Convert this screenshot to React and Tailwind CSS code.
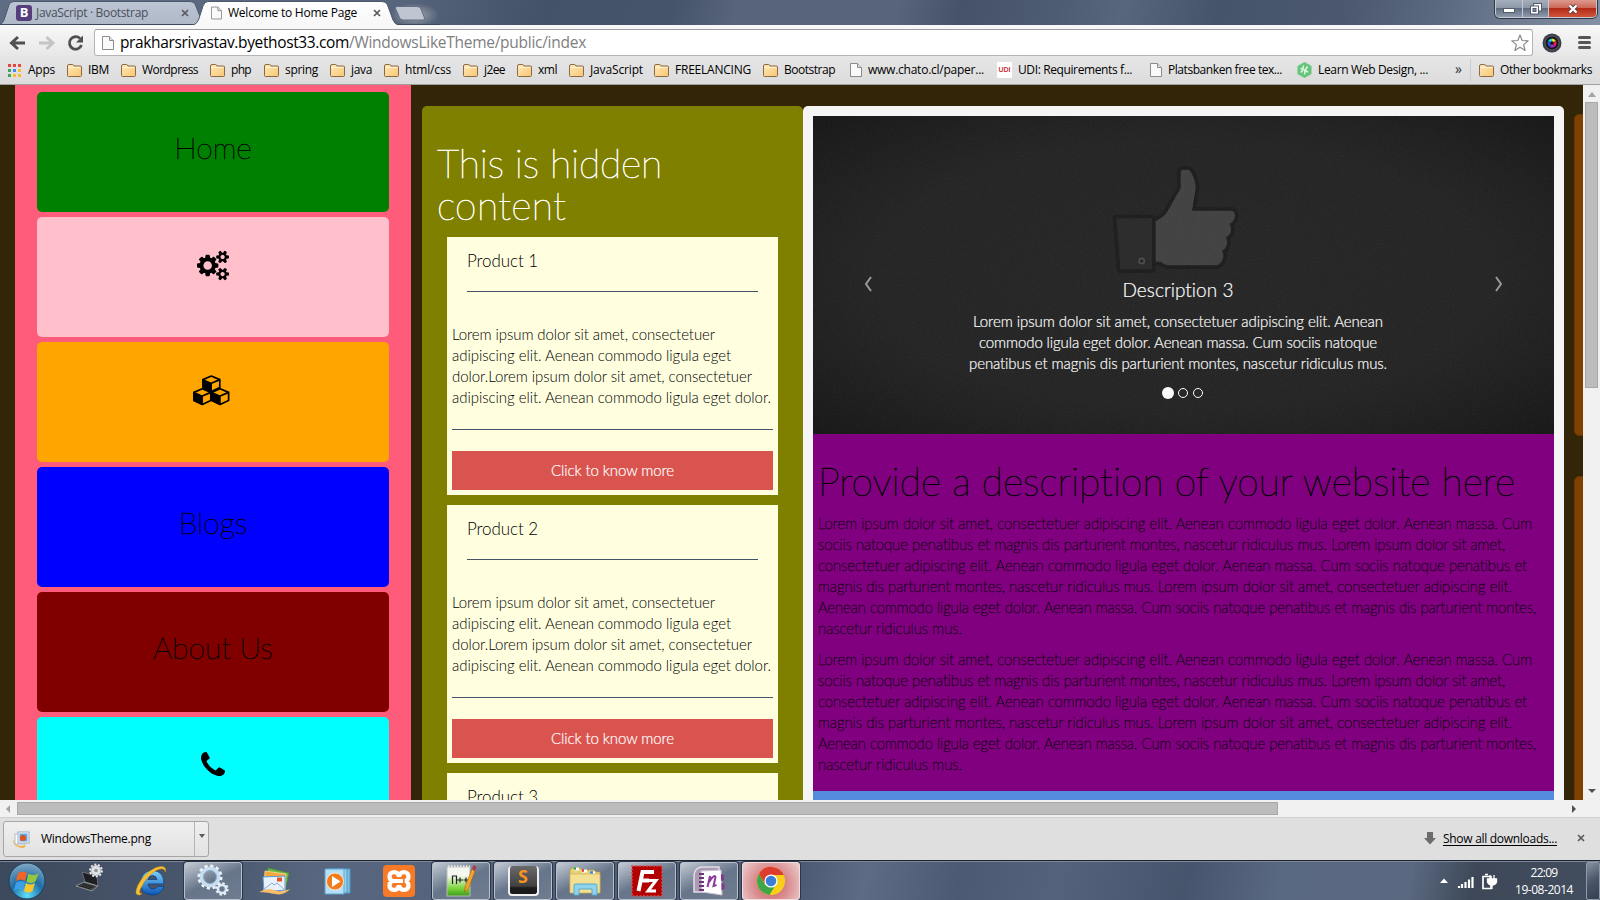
import React, { useLayoutEffect, useRef } from "react";

const LEAD_LINES = [
  ["Lorem ipsum dolor sit amet, consectetuer adipiscing elit. Aenean commodo ligula eget dolor. Aenean massa. Cum", 714],
  ["sociis natoque penatibus et magnis dis parturient montes, nascetur ridiculus mus. Lorem ipsum dolor sit amet,", 687],
  ["consectetuer adipiscing elit. Aenean commodo ligula eget dolor. Aenean massa. Cum sociis natoque penatibus et", 709],
  ["magnis dis parturient montes, nascetur ridiculus mus. Lorem ipsum dolor sit amet, consectetuer adipiscing elit.", 694],
  ["Aenean commodo ligula eget dolor. Aenean massa. Cum sociis natoque penatibus et magnis dis parturient montes,", 718],
  ["nascetur ridiculus mus.", 144],
];

const PRODUCT_LINES = [
  ["Lorem ipsum dolor sit amet, consectetuer", 263],
  ["adipiscing elit. Aenean commodo ligula eget", 279],
  ["dolor.Lorem ipsum dolor sit amet, consectetuer", 300],
  ["adipiscing elit. Aenean commodo ligula eget dolor.", 319],
];

const SLIDE_LINES = [
  ["Lorem ipsum dolor sit amet, consectetuer adipiscing elit. Aenean", 410],
  ["commodo ligula eget dolor. Aenean massa. Cum sociis natoque", 398],
  ["penatibus et magnis dis parturient montes, nascetur ridiculus mus.", 418],
];

/* Single-line label whose tracking is adjusted to fill a given width. */
function Fit({ w, className = "", children }) {
  const ref = useRef(null);
  useLayoutEffect(() => {
    const el = ref.current;
    el.style.letterSpacing = "0px";
    const natural = el.getBoundingClientRect().width;
    el.style.letterSpacing = (w - natural) / el.textContent.length + "px";
  }, [w]);
  return (
    <span ref={ref} className={"block w-fit whitespace-pre shrink-0 [font-variant-ligatures:none] " + className}>
      {children}
    </span>
  );
}

function Folder() {
  return (
    <svg className="shrink-0" width="15" height="13" viewBox="0 0 15 13">
      <defs>
        <linearGradient id="fold" x1="0" y1="0" x2="1" y2="1">
          <stop offset="0" stopColor="#ffe9b8" />
          <stop offset="1" stopColor="#f8c772" />
        </linearGradient>
      </defs>
      <path d="M.5 11.5V2Q.5.5 2 .5h3.500Q6.500.5 7 2h6.500q1 0 1 1v8.500q0 1-1 1h-12q-1 0-1-1z" fill="url(#fold)" stroke="#8b6a48" />
      <path d="M1.500 3.500h12" stroke="#fff3d4" />
    </svg>
  );
}

function Page({ w = 12, h = 14 }) {
  return (
    <svg className="shrink-0" width={w} height={h} viewBox="0 0 12 14">
      <path d="M.5.5h7l4 4v9H.5z" fill="#fafafa" stroke="#8c8c8c" />
      <path d="M7.500.5v4h4" fill="#e2e2e2" stroke="#8c8c8c" />
    </svg>
  );
}

function Cross({ c = "#5a5a5a" }) {
  return (
    <svg className="shrink-0" width="8" height="8" viewBox="0 0 8 8">
      <path d="M1 1l6 6M7 1l-6 6" stroke={c} strokeWidth="1.700" />
    </svg>
  );
}

function TitleBar() {
  return (
    <div className="relative h-[25px] shrink-0 bg-[linear-gradient(105deg,#5f6d84_0%,#56647c_25%,#445268_34%,#46546b_42%,#57647b_46%,#57647c_56%,#46526a_60%,#4d5b73_66%,#58667d_70%,#46546b_76%,#4b586f_84%,#5c6a81_90%,#8490a3_100%)]">
      <svg className="absolute left-0 top-0" width="440" height="25" viewBox="0 0 440 25">
        <defs>
          <linearGradient id="tabA" x1="0" y1="0" x2="0" y2="1">
            <stop offset="0" stopColor="#bcc5d3" />
            <stop offset="1" stopColor="#aeb8c7" />
          </linearGradient>
          <linearGradient id="tabB" x1="0" y1="0" x2="0" y2="1">
            <stop offset="0" stopColor="#fff" />
            <stop offset="1" stopColor="#f7f7f7" />
          </linearGradient>
          <radialGradient id="glow">
            <stop offset="0" stopColor="#d9d5c8" stopOpacity=".6" />
            <stop offset="1" stopColor="#d9d5c8" stopOpacity="0" />
          </radialGradient>
        </defs>
        <ellipse cx="415" cy="15" rx="24" ry="12" fill="url(#glow)" />
        <path d="M0 24.500Q3 23 4 20L9 5Q10 1.500 14 1.500H190Q194 1.500 195.500 5L203 24.500z" fill="url(#tabA)" stroke="#4c586b" />
        <path d="M0 24.500H440" stroke="#3c485b" />
        <path d="M192 25.500Q197 24 198.500 20L203 6Q204.500 1.500 208 1.500H382Q386 1.500 387.500 5L393 20Q394.500 24 399 25.500z" fill="url(#tabB)" stroke="#4c586b" />
        <path d="M397 6.500H417Q420 6.500 421 9L424.500 18Q425 20 423 20H403Q400.500 20 399.500 17.500L395.500 8.500Q395 6.500 397 6.500z" fill="#bfc6d1" stroke="#616e82" />
        <rect x="16" y="5" width="16" height="16" rx="3" fill="#563d7c" />
      </svg>
      <div className="relative flex h-[25px] items-center font-['Open_Sans',sans-serif] text-[12px]">
        <div className="ml-4 flex h-4 w-4 items-center justify-center text-[13px] font-bold text-white">B</div>
        <div className="ml-1 w-[145px] text-[#4b4f58]"><Fit w={112}>JavaScript · Bootstrap</Fit></div>
        <div className="-ml-[3px] flex w-[33px] pl-[3px]"><Cross /></div>
        <div className="flex w-[17px]"><Page w={11} h={14} /></div>
        <div className="w-[145px] text-black"><Fit w={129}>Welcome to Home Page</Fit></div>
        <div className="flex"><Cross /></div>
      </div>
      <div className="absolute right-[3px] top-0 flex h-[18px] overflow-hidden rounded-b-[5px] border border-t-0 border-[#c3c9d2] shadow-[0_0_0_1px_#30394a]">
        <div className="flex w-[27px] items-center justify-center border-r border-[#c3c9d2] bg-[linear-gradient(#a5aebb_0%,#8d98a8_45%,#5f6c80_50%,#8f9aab_100%)]">
          <div className="mt-1 h-[5px] w-[12px] border border-[#535b6b] bg-white" />
        </div>
        <div className="flex w-[26px] items-center justify-center border-r border-[#c3c9d2] bg-[linear-gradient(#a5aebb_0%,#8d98a8_45%,#5f6c80_50%,#8f9aab_100%)]">
          <svg width="12" height="12" viewBox="0 0 12 12">
            <rect x="3.500" y=".5" width="8" height="7.500" fill="#fff" stroke="#535b6b" />
            <rect x=".5" y="3" width="8" height="8" fill="#fff" stroke="#535b6b" />
            <rect x="3" y="5.500" width="3" height="3" fill="#7d889a" stroke="#535b6b" />
          </svg>
        </div>
        <div className="flex w-[47px] items-center justify-center bg-[linear-gradient(#dc9a8e_0%,#cd6a5a_45%,#b32a17_50%,#d0553b_100%)]">
          <svg width="12" height="10" viewBox="0 0 12 10">
            <path d="M2.500 1.500l7 7M9.500 1.500l-7 7" stroke="#5d3a3e" strokeWidth="4" />
            <path d="M2.500 1.500l7 7M9.500 1.500l-7 7" stroke="#fff" strokeWidth="2.400" />
          </svg>
        </div>
      </div>
    </div>
  );
}

function Toolbar() {
  return (
    <div className="flex h-[33px] shrink-0 items-center bg-[linear-gradient(#f8f8f8,#e6e6e6)] pt-[2px] font-['Open_Sans',sans-serif]">
      <svg className="shrink-0" width="94" height="18" viewBox="0 0 94 18">
        <path d="M25 9H12M18 3L11.500 9L18 15" fill="none" stroke="#505050" strokeWidth="3" />
        <path d="M39 9H52M46.500 3L53 9L46.500 15" fill="none" stroke="#c4c4c4" strokeWidth="3" />
        <path d="M80 4.500A6.200 6.200 0 1 0 81.500 11" fill="none" stroke="#505050" strokeWidth="2.800" />
        <path d="M83 1.500V8.500H76z" fill="#505050" />
      </svg>
      <div className="flex h-[27px] w-[1439px] shrink-0 items-center rounded-[3px] border border-[#b4b4b4] border-t-[#9c9c9c] bg-white pl-[7px] pr-[3px]">
        <Page w={12} h={16} />
        <div className="ml-[6px] flex text-[15.500px]">
          <Fit w={229} className="text-black">prakharsrivastav.byethost33.com</Fit>
          <Fit w={237} className="text-[#808080]">/WindowsLikeTheme/public/index</Fit>
        </div>
        <svg className="ml-auto" width="18" height="18" viewBox="0 0 18 18">
          <path d="M9 1l2.200 5.500 6 .4-4.600 3.700 1.500 5.900L9 13.300l-5.100 3.200 1.500-5.900L.8 6.900l6-.4z" fill="#fff" stroke="#8a8a8a" strokeWidth="1.200" strokeLinejoin="round" />
        </svg>
      </div>
      <svg className="ml-[9px] shrink-0" width="20" height="20" viewBox="0 0 20 20">
        <circle cx="10" cy="10" r="9.500" fill="#3c4046" />
        <circle cx="10" cy="10" r="7" fill="#15171a" stroke="#5c6066" />
        <path d="M10 10L6 8A4.500 4.500 0 0 1 10 5.500z" fill="#21d3d8" />
        <path d="M10 10V5.500A4.500 4.500 0 0 1 14 8z" fill="#e6dc2a" />
        <path d="M10 10l4-2a4.500 4.500 0 0 1-1 5.500z" fill="#e0204a" />
        <path d="M10 10l3 3.500a4.500 4.500 0 0 1-5 .5z" fill="#b026d0" />
        <path d="M10 10l-2 4a4.500 4.500 0 0 1-2-6z" fill="#2552d8" />
        <circle cx="10" cy="10" r="1.800" fill="#111" />
      </svg>
      <div className="ml-[16px] flex flex-col gap-[2px]">
        <div className="h-[3px] w-[13px] rounded-sm bg-[#555]" />
        <div className="h-[3px] w-[13px] rounded-sm bg-[#555]" />
        <div className="h-[3px] w-[13px] rounded-sm bg-[#555]" />
      </div>
    </div>
  );
}

const FOLDERS = [
  ["IBM", "w-[54px]", 21],
  ["Wordpress", "w-[89px]", 56],
  ["php", "w-[54px]", 20],
  ["spring", "w-[66px]", 33],
  ["java", "w-[54px]", 21],
  ["html/css", "w-[79px]", 46],
  ["j2ee", "w-[54px]", 21],
  ["xml", "w-[52px]", 19],
  ["JavaScript", "w-[85px]", 53],
  ["FREELANCING", "w-[109px]", 76],
  ["Bootstrap", "w-[87px]", 51],
];

function Bookmarks() {
  const dots = ["#e8453c", "#e8453c", "#e8453c", "#3aa757", "#4688f1", "#f9bb2d", "#3aa757", "#f9bb2d", "#f9bb2d"];
  return (
    <div className="flex h-[27px] shrink-0 items-center border-b border-[#a0a0a0] bg-[linear-gradient(#e5e5e5,#dcdcdc)] pb-[2px] pl-2 font-['Open_Sans',sans-serif] text-[12px] text-black">
      <svg className="shrink-0" width="13" height="13" viewBox="0 0 13 13">
        {dots.map((c, i) => (
          <rect key={i} x={(i % 3) * 5} y={Math.floor(i / 3) * 5} width="3" height="3" fill={c} />
        ))}
      </svg>
      <div className="ml-[7px] w-[39px] shrink-0"><Fit w={27}>Apps</Fit></div>
      {FOLDERS.map(([name, width, tw]) => (
        <div key={name} className={"flex shrink-0 items-center gap-1.5 " + width}>
          <Folder />
          <Fit w={tw}>{name}</Fit>
        </div>
      ))}
      <div className="flex w-[147px] shrink-0 items-center gap-1.5"><Page /><Fit w={116}>www.chato.cl/paper...</Fit></div>
      <div className="flex w-[153px] shrink-0 items-center gap-1.5">
        <div className="flex h-4 w-[15px] items-center justify-center bg-white font-['Liberation_Sans',sans-serif] text-[7px] font-bold text-[#c8323c]">UDI</div>
        <Fit w={114}>UDI: Requirements f...</Fit>
      </div>
      <div className="flex w-[147px] shrink-0 items-center gap-1.5"><Page /><Fit w={114}>Platsbanken free tex...</Fit></div>
      <div className="flex w-[158px] shrink-0 items-center gap-1.5">
        <svg className="shrink-0" width="15" height="16" viewBox="0 0 15 16">
          <path d="M7.500 0l7 4v8l-7 4-7-4V4z" fill="#66c47b" />
          <path d="M6.500 3.500L6 7 3.500 6.500M6 7.500l-2 3M7.500 12.500l.5-4 3 1.500M8 8.500L10.500 4.500M6 7l2.500 2" fill="none" stroke="#dff6e4" strokeWidth="1.500" />
        </svg>
        <Fit w={110}>Learn Web Design, ...</Fit>
      </div>
      <div className="-mt-1 w-[15px] shrink-0 text-[14px] text-[#333]">»</div>
      <div className="h-[22px] w-px shrink-0 bg-[#c4ccd4]" />
      <div className="ml-2 flex shrink-0 items-center gap-1.5"><Folder /><Fit w={92}>Other bookmarks</Fit></div>
    </div>
  );
}

function CogsIcon() {
  return (
    <svg className="overflow-visible" width="32" height="29" viewBox="0 -220 1920 1720" fill="#000">
      <path d="M896 640q0-106-75-181t-181-75-181 75-75 181 75 181 181 75 181-75 75-181zm768 512q0-52-38-90t-90-38-90 38-38 90q0 53 37.500 90.500t90.500 37.500 90.500-37.500 37.500-90.500zm0-1024q0-52-38-90t-90-38-90 38-38 90q0 53 37.500 90.500t90.500 37.500 90.500-37.500 37.500-90.500zm-384 421v185q0 10-7 19.500t-16 10.500l-155 24q-11 35-32 76 34 48 90 115 7 11 7 20 0 12-7 19-23 30-82.500 89.500t-78.500 59.500q-11 0-21-7l-115-90q-37 19-77 31-11 108-23 155-7 24-30 24h-186q-11 0-20-7.500t-10-17.500l-23-153q-34-10-75-31l-118 89q-7 7-20 7-11 0-21-8-144-133-144-160 0-9 7-19 10-14 41-53t47-61q-23-44-35-82l-152-24q-10-1-17-9.500t-7-19.500v-185q0-10 7-19.500t16-10.500l155-24q11-35 32-76-34-48-90-115-7-11-7-20 0-12 7-20 22-30 82-89t79-59q11 0 21 7l115 90q34-18 77-32 11-108 23-154 7-24 30-24h186q11 0 20 7.500t10 17.500l23 153q34 10 75 31l118-89q8-7 20-7 11 0 21 8 144 133 144 160 0 8-7 19-12 16-42 54t-45 60q23 48 34 82l152 23q10 2 17 10.500t7 19.500zm640 533v140q0 16-149 31-12 27-30 52 51 113 51 138 0 4-4 7-122 71-124 71-8 0-46-47t-52-68q-20 2-30 2t-30-2q-14 21-52 68t-46 47q-2 0-124-71-4-3-4-7 0-25 51-138-18-25-30-52-149-15-149-31v-140q0-16 149-31 13-29 30-52-51-113-51-138 0-4 4-7 4-2 35-20t59-34 30-16q8 0 46 46.500t52 67.500q20-2 30-2t30 2q51-71 92-112l6-2q4 0 124 70 4 3 4 7 0 25-51 138 17 23 30 52 149 15 149 31zm0-1024v140q0 16-149 31-12 27-30 52 51 113 51 138 0 4-4 7-122 71-124 71-8 0-46-47t-52-68q-20 2-30 2t-30-2q-14 21-52 68t-46 47q-2 0-124-71-4-3-4-7 0-25 51-138-18-25-30-52-149-15-149-31v-140q0-16 149-31 13-29 30-52-51-113-51-138 0-4 4-7 4-2 35-20t59-34 30-16q8 0 46 46.500t52 67.500q20-2 30-2t30 2q51-71 92-112l6-2q4 0 124 70 4 3 4 7 0 25-51 138 17 23 30 52 149 15 149 31z" />
    </svg>
  );
}

function Cube({ x, y }) {
  return (
    <g transform={`translate(${x} ${y})`} strokeLinejoin="round">
      <path d="M9.300 1L17.800 4.600V12.600L9.300 16.600L.9 12.600V4.600z" fill="none" stroke="#000" strokeWidth="1.700" />
      <path d="M.9 4.600L9.300 8.200V16.600L.9 12.600z" fill="#000" stroke="#000" strokeWidth="1.200" />
      <path d="M9.300 8.200L17.800 4.600" stroke="#000" strokeWidth="1.700" />
    </g>
  );
}

function CubesIcon() {
  return (
    <svg width="37" height="31" viewBox="0 0 37 31">
      <Cube x={9} y={0} />
      <Cube x={0} y={12.800} />
      <Cube x={17.800} y={12.800} />
    </svg>
  );
}

function PhoneIcon() {
  return (
    <svg width="24" height="24" viewBox="192 128 1408 1408">
      <path d="M1600 1240q0 27-10 70.500t-21 68.500q-21 50-122 106-94 51-186 51-27 0-53-3.500t-57-12.500-47-14.500-55.500-20.500-49.500-18q-98-35-175-83-127-79-264-216t-216-264q-48-77-83-175-3-9-18-49.500t-20.500-55.500-14.500-47-12.500-57-3.500-53q0-92 51-186 56-101 106-122 25-11 68.500-21t70.500-10q14 0 21 3 18 6 53 76 11 19 30 54t35 63.500 31 53.500q3 4 17.500 25t21.500 35.500 7 28.500q0 20-28.500 50t-62 55-62 53-28.500 46q0 9 5 22.500t8.500 20.500 14 24 11.500 19q76 137 174 235t235 174q2 1 19 11.500t24 14 20.500 8.500 22.500 5q18 0 46-28.500t53-62 55-62 50-28.500q14 0 28.500 7t35.500 21.500 25 17.500q25 15 53.500 31t63.500 35 54 30q70 35 76 53 3 7 3 21z" />
    </svg>
  );
}

function Sidebar() {
  const tile = "flex h-[120px] shrink-0 flex-col items-center rounded-[5px] ";
  const label = "mt-[37px] text-[30px] leading-[36px] font-thin text-black [-webkit-text-stroke:0.5px_#000]";
  return (
    <div className="ml-[15px] flex w-[396px] shrink-0 flex-col gap-[5px] bg-[#ff5b7b] px-[22px] pt-[7px]">
      <div className={tile + "bg-[#008000]"}><div className={label}>Home</div></div>
      <div className={tile + "bg-[#ffc0cb]"}><div className="mt-[34px]"><CogsIcon /></div></div>
      <div className={tile + "bg-[#ffa500]"}><div className="mr-[3px] mt-[33px]"><CubesIcon /></div></div>
      <div className={tile + "bg-[#0000ff]"}><div className={label}>Blogs</div></div>
      <div className={tile + "bg-[#800000]"}><div className={label}>About Us</div></div>
      <div className={tile + "bg-[#00ffff]"}><div className="mt-[35px]"><PhoneIcon /></div></div>
    </div>
  );
}

function Product({ n, body = true }) {
  return (
    <div className="ml-[10px] flex h-[258px] w-[331px] shrink-0 flex-col bg-[#ffffe0] px-[5px] text-black">
      <div className="ml-[15px] mt-[12px] h-[42px] w-[291px] text-[17px] leading-[24px] font-light"><Fit w={71}>{"Product " + n}</Fit></div>
      {body && (
        <>
          <div className="ml-[15px] w-[291px] border-t border-[#44546a]" />
          <div className="mt-[32px] text-[15px] leading-[21px] font-light">
            {PRODUCT_LINES.map(([t, w]) => (
              <Fit key={t} w={w}>{t}</Fit>
            ))}
          </div>
          <div className="mt-[21px] border-t border-[#44546a]" />
          <div className="mt-[21px] flex h-[39px] justify-center bg-[#d9534f] text-[15px] leading-[39px] font-light text-white [-webkit-text-stroke:0.2px_#fff]">
            <Fit w={123}>Click to know more</Fit>
          </div>
        </>
      )}
    </div>
  );
}

function Thumb() {
  return (
    <svg width="130" height="113" viewBox="30 39 390 339">
      <path d="M49 205H156V358H61z" fill="#272727" stroke="#1a1a1a" strokeWidth="22" strokeLinejoin="round" paintOrder="stroke" />
      <path d="M167 213Q190 202 200 188L242 115V66Q242 59 250 59H264Q270 59 274 68Q290 98 286 122L276 182H395Q405 184 405 198Q403 216 388 221Q394 230 393 241Q391 256 378 262Q382 271 381 282Q378 297 366 302Q371 311 370 320Q366 341 350 346H205Q190 343 182 335H167z" fill="#3f3f3f" stroke="#1a1a1a" strokeWidth="22" strokeLinejoin="round" paintOrder="stroke" />
      <circle cx="125" cy="333" r="8" fill="#222" stroke="#4a4a4a" strokeWidth="5" />
    </svg>
  );
}

function Carousel() {
  return (
    <div className="relative flex h-[318px] shrink-0 flex-col items-center bg-[radial-gradient(ellipse_at_center,#232323_0%,#212121_60%,#191919_85%,#131313_100%)] text-white">
      <div className="mt-[47px] h-[115px] -ml-[17px]"><Thumb /></div>
      <div className="-ml-[11px] text-[19px] leading-[24px] font-light"><Fit w={111} className="[-webkit-text-stroke:0.2px_#fff]">Description 3</Fit></div>
      <div className="-ml-[11px] mt-[9px] flex flex-col items-center text-[15px] leading-[21px] font-light [-webkit-text-stroke:0.2px_#fff]">
        {SLIDE_LINES.map(([t, w]) => (
          <Fit key={t} w={w}>{t}</Fit>
        ))}
      </div>
      <div className="-ml-[2px] mt-[13px] flex h-3 items-center gap-[5px]">
        <div className="-mr-[1px] h-3 w-3 rounded-full bg-white" />
        <div className="h-[10px] w-[10px] rounded-full border border-white" />
        <div className="h-[10px] w-[10px] rounded-full border border-white" />
      </div>
      <svg className="absolute inset-0 opacity-[0.080]" width="741" height="318">
        <filter id="grain"><feTurbulence type="fractalNoise" baseFrequency="0.8" numOctaves="2" stitchTiles="stitch" /><feColorMatrix type="saturate" values="0" /></filter>
        <rect width="741" height="318" filter="url(#grain)" />
      </svg>
      <svg className="absolute left-[50px] top-[160px]" width="10" height="16" viewBox="0 0 10 16"><path d="M8 1L3 8L8 15" fill="none" stroke="#9a9a9a" strokeWidth="2" /></svg>
      <svg className="absolute left-[681px] top-[160px]" width="10" height="16" viewBox="0 0 10 16"><path d="M2 1L7 8L2 15" fill="none" stroke="#9a9a9a" strokeWidth="2" /></svg>
    </div>
  );
}

function WebPage() {
  return (
    <div className="flex w-[1583px] shrink-0 overflow-hidden bg-[#332508] font-['Lato',sans-serif]">
      <Sidebar />
      <div className="ml-[11px] mt-[21px] flex w-[381px] shrink-0 flex-col rounded-t-[5px] bg-[#808000] pl-[15px] pt-[36px]">
        <div className="mb-[11px] h-[84px] text-[39px] leading-[42px] font-thin text-white [-webkit-text-stroke:0.7px_#fff]">
          <Fit w={225}>This is hidden</Fit>
          <Fit w={129}>content</Fit>
        </div>
        <div className="flex flex-col gap-[10px]">
          <Product n={1} />
          <Product n={2} />
          <Product n={3} body={false} />
        </div>
      </div>
      <div className="mt-[21px] flex w-[761px] shrink-0 flex-col rounded-t-[5px] bg-[#f5f5f5] px-[10px] pt-[10px]">
        <Carousel />
        <div className="h-[357px] shrink-0 bg-[#800080] pl-[5px] pt-[26px] text-black">
          <div className="text-[39px] leading-[43px] font-thin [-webkit-text-stroke:0.6px_#000]"><Fit w={697}>Provide a description of your website here</Fit></div>
          {[0, 1].map((i) => (
            <div key={i} className="mb-[10px] mt-[10px] text-[15px] leading-[21px] font-thin [-webkit-text-stroke:0.35px_#000]">
              {LEAD_LINES.map(([t, w]) => (
                <Fit key={t} w={w}>{t}</Fit>
              ))}
            </div>
          ))}
        </div>
        <div className="h-[20px] shrink-0 bg-[#548bdb]" />
      </div>
      <div className="ml-[10px] flex w-[9px] shrink-0 flex-col gap-[40px] overflow-hidden pt-[29px]">
        <div className="h-[322px] w-10 shrink-0 rounded-[5px] border border-[#6b3600] bg-[#804000]" />
        <div className="h-[400px] w-10 shrink-0 rounded-[5px] border border-[#6b3600] bg-[#804000]" />
      </div>
    </div>
  );
}

function DownloadBar() {
  return (
    <div className="flex h-[43px] shrink-0 items-center border-t border-[#cfcfcf] bg-[#dfdfdf] font-['Open_Sans',sans-serif] text-[12px] text-black">
      <div className="ml-[3px] flex h-[36px] w-[206px] items-stretch rounded-[3px] border border-[#a6a6a6] bg-[linear-gradient(#efefef,#e2e2e2)]">
        <div className="flex w-[191px] items-center border-r border-[#b4b4b4] pl-[9px]">
          <svg width="17" height="17" viewBox="0 0 17 17">
            <path d="M1 9q0 6 8 6l4-1-2 3Q1 17 0 10z" fill="#f2b13c" />
            <rect x="2" y="3" width="10" height="10" fill="#fff" stroke="#b5bcc8" />
            <rect x="5" y="1" width="11" height="11" fill="#fff" stroke="#9aa9bd" />
            <rect x="6.500" y="2.500" width="8" height="8" fill="#5aa9e6" />
            <circle cx="10" cy="7" r="3" fill="#e4501b" />
          </svg>
          <div className="-mt-px ml-[11px]"><Fit w={110}>WindowsTheme.png</Fit></div>
        </div>
        <div className="flex flex-1 justify-center pt-[12px]">
          <svg width="6" height="4" viewBox="0 0 6 4"><path d="M0 0h6L3 4z" fill="#5a5a5a" /></svg>
        </div>
      </div>
      <svg className="-mt-px ml-auto" width="12" height="13" viewBox="0 0 12 13"><path d="M3 0h6v6h3L6 12.500 0 6h3z" fill="#6c6c6c" /></svg>
      <div className="ml-[7px]"><Fit w={114} className="underline underline-offset-2">Show all downloads...</Fit></div>
      <div className="ml-5 mr-[15px] pb-[2px]"><Cross /></div>
    </div>
  );
}

function TaskIcon({ kind }) {
  switch (kind) {
    case "laptop":
      return (
        <svg width="32" height="32" viewBox="0 0 32 32">
          <path d="M8 9l15 4 1 10-13-4z" fill="#1d1f22" stroke="#6b6f75" />
          <path d="M10 19l14 4-6 5L2 23z" fill="#4a4d52" stroke="#a6a8ab" strokeWidth=".7" />
          <path d="M8.500 20.500l12 3.500M6.500 21.500l12 3.500M4.500 22.500l12 3.500" stroke="#1e1e1e" />
          <circle cx="22" cy="7.500" r="5" fill="#dfe2e6" stroke="#b7babf" />
          <circle cx="22" cy="7.500" r="6" fill="none" stroke="#eceef0" strokeWidth="1.800" strokeDasharray="2 1.700" />
          <circle cx="22" cy="7.500" r="1.800" fill="#8d9299" />
        </svg>
      );
    case "ie":
      return (
        <svg width="34" height="32" viewBox="0 0 34 32">
          <defs><linearGradient id="ieg" x1="0" y1="0" x2="0" y2="1"><stop offset="0" stopColor="#7fd4fb" /><stop offset="1" stopColor="#0b55b8" /></linearGradient></defs>
          <path d="M30 19H14q1 5 5 5 3 0 4.500-2.500H30Q27 30 18.500 30 6.500 29 6.500 18 7 6 18.500 5.500 30 6 30 19zM14 14.500h9q-1-4-4.500-4T14 14.500z" fill="url(#ieg)" stroke="#063c86" strokeWidth=".7" />
          <path d="M6 30Q-1 31 4 20 10 8 22 2.500 33-1 31.500 7 30 1.500 22 5.500 12 12 8 21 3 29 8 28.500z" fill="#f6c232" stroke="#c88c12" strokeWidth=".5" />
        </svg>
      );
    case "gears":
      return (
        <svg width="34" height="34" viewBox="0 0 34 34">
          <circle cx="14" cy="13" r="8.500" fill="none" stroke="#c6ddef" strokeWidth="4" />
          <circle cx="14" cy="13" r="11.300" fill="none" stroke="#e8f3fa" strokeWidth="2.500" strokeDasharray="3.200 2.700" />
          <circle cx="14" cy="13" r="6.500" fill="none" stroke="#86aac8" />
          <circle cx="26" cy="25" r="4" fill="none" stroke="#dcebf6" strokeWidth="2.500" />
          <circle cx="26" cy="25" r="5.800" fill="none" stroke="#e8f3fa" strokeWidth="1.800" strokeDasharray="2.400 2.100" />
        </svg>
      );
    case "mail":
      return (
        <svg width="32" height="32" viewBox="0 0 32 32">
          <path d="M9 3l21 5-4 17L7 22z" fill="#6fb746" stroke="#4c8e2b" strokeWidth=".6" />
          <path d="M6 6l21 3-1 17L5 24z" fill="#f6a83d" stroke="#fbd9a0" strokeWidth=".8" />
          <path d="M4 12l22-1v14L5 27z" fill="#e9f2fb" stroke="#5b9ada" />
          <path d="M4 25l9-7 2 2 3-2 8 7" fill="none" stroke="#88aed8" />
          <rect x="18" y="12.500" width="5" height="4" fill="#e4522a" />
          <path d="M0 27q9-5 15-2t16-1q-6 7-15 5T0 27z" fill="#f8bd6b" />
        </svg>
      );
    case "wmp":
      return (
        <svg width="28" height="28" viewBox="0 0 28 28">
          <path d="M8 2h19v24H8z" fill="#7fc0e2" stroke="#4e97c4" />
          <path d="M5 2h19v24H5z" fill="#9cd2ee" stroke="#4e97c4" />
          <path d="M2 2h19v25H2z" fill="#b6e0f5" stroke="#5da4cd" />
          <circle cx="12" cy="14.500" r="8.500" fill="#f07c1e" stroke="#fbe3c8" />
          <path d="M9 9l8.500 5.500L9 20z" fill="#fff" />
        </svg>
      );
    case "xampp":
      return (
        <svg width="32" height="32" viewBox="0 0 32 32">
          <rect width="32" height="32" rx="4" fill="#f97a26" />
          <path d="M13 16H10Q6.500 15.500 6.500 11.500T11 7q4 0 5 4.500Q17 7 21 7q4.500.5 4.500 4.500T22 16q3.500.5 3.500 4.500T21 25q-4 0-5-4.500Q15 25 11 25q-4.500-.5-4.500-4.500T10 16" fill="none" stroke="#fff" strokeWidth="4.200" />
          <path d="M12 16h8" stroke="#fff" strokeWidth="4" />
        </svg>
      );
    case "npp":
      return (
        <svg width="32" height="34" viewBox="0 0 32 34">
          <defs><linearGradient id="npg" x1="0" y1="0" x2="0" y2="1"><stop offset=".3" stopColor="#f5f8ee" /><stop offset=".75" stopColor="#7ad23a" /><stop offset="1" stopColor="#3a9b18" /></linearGradient></defs>
          <rect x="2" y="3" width="23" height="29" fill="url(#npg)" stroke="#b9bbb4" />
          <path d="M3 2.500h22" stroke="#e8e8e8" strokeWidth="2.500" strokeDasharray="1.500 1.500" />
          <path d="M7.500 20V12h4v8M12 16h6M15 13.500v5M18.500 16h5M21 13.500v5" fill="none" stroke="#222" strokeWidth="1.200" />
          <path d="M27 5l-7 18-.500 5 4-3.500L30 7z" fill="#f4a52b" stroke="#a4620f" strokeWidth=".6" />
          <path d="M27 5l1.500-4 3 1.500L30 7z" fill="#b03b50" />
        </svg>
      );
    case "sublime":
      return (
        <div className="flex h-[30px] w-[31px] items-start justify-center rounded-[4px] border-2 border-t-0 border-[#f0f0f0] bg-[linear-gradient(#6a6a6a,#404040_72%,#1b1b1b_78%)] font-['Open_Sans',sans-serif] text-[18px] leading-[21px] font-bold text-[#f7931e]">S</div>
      );
    case "explorer":
      return (
        <svg width="34" height="32" viewBox="0 0 34 32">
          <path d="M2 6q0-3 3-3h7l2 2h12l2 2h4v20H2z" fill="#e9cf78" stroke="#b99a42" strokeWidth=".7" />
          <path d="M6 4h5M14 6h5M22 8h5" stroke="#fff" strokeWidth="3" />
          <path d="M6 3.500h2" stroke="#24a838" strokeWidth="2.500" />
          <path d="M14 5.500h2" stroke="#d93a2b" strokeWidth="2.500" />
          <path d="M22 7.500h3" stroke="#2b8fe0" strokeWidth="2.500" />
          <path d="M2 9h30v19H2z" fill="#f3e093" stroke="#cbb056" strokeWidth=".7" />
          <path d="M6 30V20q0-1 2-1h19q2 0 2 1v10h-5v-6H11v6z" fill="#8fd3ee" stroke="#5aa9cc" />
        </svg>
      );
    case "fz":
      return (
        <svg width="32" height="32" viewBox="0 0 32 32">
          <rect x="1" y="1" width="30" height="30" fill="#b30000" stroke="#cf5050" strokeWidth="1.500" strokeDasharray="2 1.500" />
          <path d="M7.500 26L11.500 7H23M9.500 15.500H18" fill="none" stroke="#fff" strokeWidth="4" />
          <path d="M16 15.500h9L17 26h8" fill="none" stroke="#fff" strokeWidth="3" />
        </svg>
      );
    case "onenote":
      return (
        <svg width="32" height="32" viewBox="0 0 32 32">
          <path d="M1 10q1-8 9-8h16v25H1z" fill="#a99bb0" stroke="#e4dce8" strokeWidth="1.500" />
          <path d="M8 6l20-1 1 25-20-3z" fill="#fff" stroke="#cfc4d4" />
          <path d="M28 9l3 1v5l-3 1M28.500 18l3 1v5l-3 1" fill="#85398c" />
          <path d="M6 9h5M6 13h5M6 17h5M6 21h5M6 25h5" stroke="#6b3576" strokeWidth="1.800" />
          <path d="M14.500 22l2.500-11 .5 4q4-6 5-3l-2 9 3-1" fill="none" stroke="#8e3c9c" strokeWidth="2" />
        </svg>
      );
    case "chrome":
      return (
        <svg width="30" height="30" viewBox="0 0 30 30">
          <circle cx="15" cy="15" r="14" fill="#f9cf17" />
          <path d="M2.900 8A14 14 0 0 1 27.800 9H15L9 18z" fill="#dd3d2c" />
          <path d="M2.900 8L9 18.500 15 21 19.500 19 13.500 29A14 14 0 0 1 2.900 8z" fill="#3fa648" />
          <circle cx="15" cy="15" r="6.600" fill="#fff" />
          <circle cx="15" cy="15" r="5.300" fill="#3a7fd5" />
        </svg>
      );
    default:
      return null;
  }
}

function Taskbar() {
  const open = "mr-1 flex h-[38px] w-[58px] shrink-0 items-center justify-center rounded-[3px] border border-[#b7c0cc] ring-1 ring-[#2b3647] bg-[linear-gradient(155deg,#c3cad3_0%,#8b97a8_30%,#67758a_50%,#6f7c90_100%)]";
  return (
    <div className="flex h-[40px] shrink-0 items-center border-t border-[#1b2330] bg-[linear-gradient(100deg,#3c485b_0%,#4b5970_14%,#58677f_20%,#4c5b73_50%,#5d6b84_54%,#4b5a72_60%,#54637b_66%,#46556c_74%,#5a6982_80%,#5a6880_88%,#3d4757_92%,#434e60_100%)] shadow-[inset_0_1px_0_#7c8899]">
      <svg className="ml-2 shrink-0" width="38" height="38" viewBox="0 0 38 38">
        <defs><radialGradient id="orb" cx=".5" cy=".9" r=".9"><stop offset="0" stopColor="#5fe0fb" /><stop offset=".5" stopColor="#1f6da4" /><stop offset="1" stopColor="#83aac4" /></radialGradient></defs>
        <circle cx="19" cy="19" r="18" fill="url(#orb)" stroke="#1c3d5b" />
        <path d="M10 11q5-3 9 0l-2 8q-4-3-9 0z" fill="#f0652a" />
        <path d="M20.500 11.500q4 3 10 0l-3 8q-5 3-9 0z" fill="#93c83e" />
        <path d="M8 20.500q5-3 9 0l-2 8q-4-3-9 0z" fill="#3f9fe6" />
        <path d="M18 21q4 3 9 0l-2.500 8q-4 3-8.500 0z" fill="#fbc62c" />
      </svg>
      <div className="-mt-1 flex w-[88px] justify-center"><TaskIcon kind="laptop" /></div>
      <div className="flex w-[34px] justify-center"><TaskIcon kind="ie" /></div>
      <div className="w-[16px]" />
      <div className={open + " !mr-0"}><TaskIcon kind="gears" /></div>
      <div className="flex w-[66px] justify-center"><TaskIcon kind="mail" /></div>
      <div className="flex w-[58px] justify-center"><TaskIcon kind="wmp" /></div>
      <div className="flex w-[66px] justify-center"><TaskIcon kind="xampp" /></div>
      {["npp", "sublime", "explorer", "fz", "onenote"].map((k) => (
        <div key={k} className={open}><TaskIcon kind={k} /></div>
      ))}
      <div className="flex h-[38px] w-[58px] shrink-0 items-center justify-center rounded-[3px] border border-[#f2dcdc] bg-[radial-gradient(circle_at_50%_60%,#c65e62_0%,#d8898c_45%,#edcfd0_100%)] ring-1 ring-[#2b3647]">
        <TaskIcon kind="chrome" />
      </div>
      <svg className="ml-auto shrink-0" width="66" height="20" viewBox="0 0 66 20">
        <path d="M6 12L10 7.500 14 12z" fill="#fff" />
        <path d="M25 17v-2M28 17v-4M31.500 17v-6M35 17V8.500M38.500 17V6" stroke="#fff" strokeWidth="2.200" />
        <path d="M51 3.500h3M49 5.500h8v12h-8z" fill="none" stroke="#fff" strokeWidth="1.700" />
        <path d="M56 4v4M60 4v4M53.500 8h9v3q-1 3-4.500 3t-4.500-3zM58 14v4" fill="#fff" stroke="#fff" strokeWidth="1.300" />
      </svg>
      <div className="ml-[15px] mr-[13px] flex w-[58px] flex-col items-center font-['Open_Sans',sans-serif] text-[12px] leading-[17px] text-white">
        <Fit w={27}>22:09</Fit>
        <Fit w={58}>19-08-2014</Fit>
      </div>
      <div className="h-[38px] w-[14px] shrink-0 rounded-[2px] border border-[#8f99a8] bg-[linear-gradient(150deg,#8590a1_0%,#4a5668_50%,#354052_100%)]" />
    </div>
  );
}

export default function App() {
  return (
    <div className="flex h-[900px] w-[1600px] flex-col overflow-hidden bg-[#f1f1f1]">
      <TitleBar />
      <Toolbar />
      <Bookmarks />
      <div className="flex h-[715px] shrink-0 overflow-hidden">
        <WebPage />
        <div className="flex w-[17px] flex-col items-center bg-[#f1f1f1] pt-[7px]">
          <svg width="8" height="5" viewBox="0 0 8 5"><path d="M0 5L4 0l4 5z" fill="#a3a3a3" /></svg>
          <div className="mt-[5px] h-[286px] w-[13px] border border-[#a8a8a8] bg-[#bcbcbc]" />
          <svg className="mt-auto mb-[7px]" width="8" height="4" viewBox="0 0 8 4"><path d="M0 0h8L4 4z" fill="#505050" /></svg>
        </div>
      </div>
      <div className="flex h-[17px] shrink-0 items-center bg-[#f1f1f1] pl-[6px]">
        <svg width="4" height="8" viewBox="0 0 4 8"><path d="M4 0v8L0 4z" fill="#a3a3a3" /></svg>
        <div className="ml-[7px] h-[13px] w-[1261px] border border-[#a8a8a8] bg-[#bcbcbc]" />
        <svg className="ml-auto mr-[24px]" width="4" height="8" viewBox="0 0 4 8"><path d="M0 0l4 4-4 4z" fill="#505050" /></svg>
      </div>
      <DownloadBar />
      <Taskbar />
    </div>
  );
}
